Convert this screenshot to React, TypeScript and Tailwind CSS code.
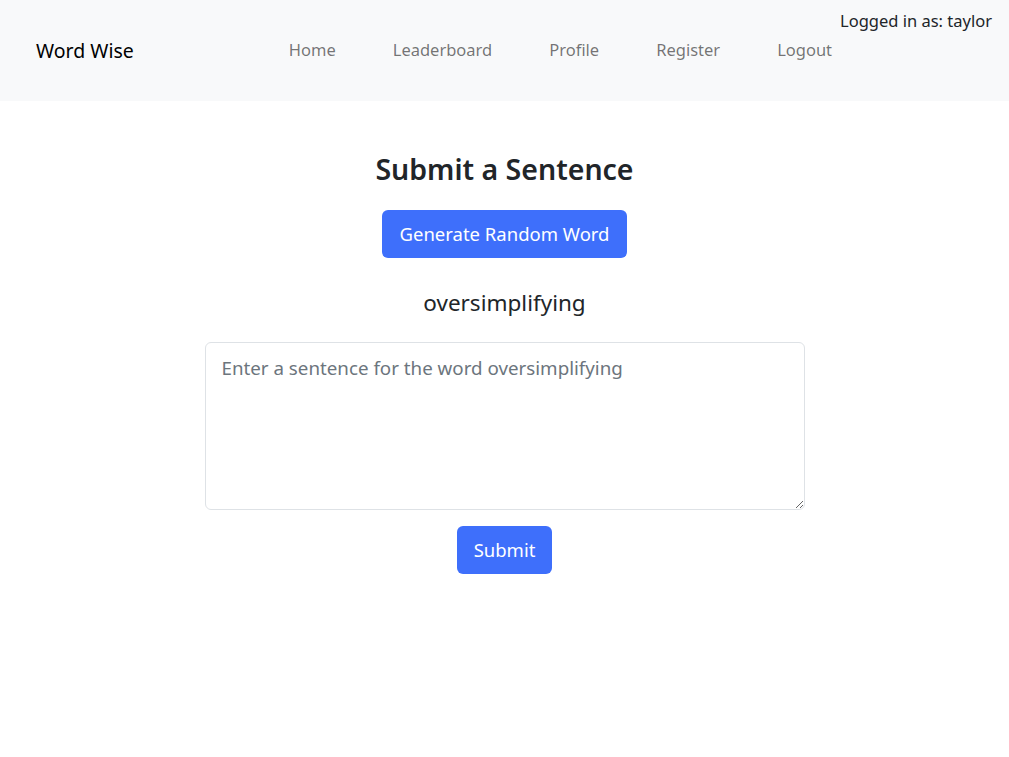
import { useState } from "react";

const links = ["Home", "Leaderboard", "Profile", "Register", "Logout"];

export default function App() {
  const [word] = useState("oversimplifying");
  const [sentence, setSentence] = useState("");

  return (
    <div className="min-h-screen bg-white text-[#212529] font-['Noto_Sans','Open_Sans',sans-serif]">
      <nav className="h-[101px] bg-[#f8f9fa] flex pl-9 pr-[17px] whitespace-nowrap">
        <div className="flex items-center shrink-0">
          <span className="text-[19.5px] text-black">Word Wise</span>
          <ul className="flex gap-[57px] ml-[155px]">
            {links.map((l) => (
              <li key={l}>
                <a href="#" className="block text-[16.5px] text-[rgba(0,0,0,0.55)]">
                  {l}
                </a>
              </li>
            ))}
          </ul>
        </div>
        <div className="ml-auto pt-[9px] text-[16.5px] shrink-0">Logged in as: taylor</div>
      </nav>

      <main className="flex flex-col items-center pt-[51px]">
        <h2 className="text-[28.5px] font-semibold leading-[1.2]">Submit a Sentence</h2>
        <button className="mt-[24px] h-12 px-[17px] rounded-md bg-[#3e6ffb] text-white text-[18.5px]">
          Generate Random Word
        </button>
        <p className="mt-[31px] text-[22.5px] leading-tight">{word}</p>
        <textarea
          value={sentence}
          onChange={(e) => setSentence(e.target.value)}
          placeholder={`Enter a sentence for the word ${word}`}
          className="mt-[25px] w-[600px] h-[168px] border border-[#dee2e6] rounded-md px-4 py-[11px] text-[18.75px] placeholder:text-[#6c757d] outline-none"
        />
        <button className="mt-[16px] h-12 px-[17px] rounded-md bg-[#3e6ffb] text-white text-[18.5px]">
          Submit
        </button>
      </main>
    </div>
  );
}
